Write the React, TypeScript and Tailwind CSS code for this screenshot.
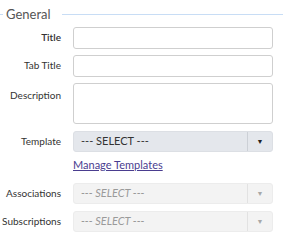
import { ReactNode } from "react";

// ================= ROW =================
function Row({
  label,
  children,
  top = false,
  bold = false,
}: {
  label: string;
  children: ReactNode;
  top?: boolean;
  bold?: boolean;
}) {
  return (
    <div className={`flex ${top ? "items-start" : "items-center"}`}>
      <div
        className={`w-[62px] shrink-0 whitespace-nowrap pr-[1px] text-right text-[10px] text-[#333] ${
          top ? "pt-[5px]" : ""
        } ${bold ? "font-semibold" : ""}`}
      >
        {label}
      </div>
      <div className="ml-[11px] w-[200px]">{children}</div>
    </div>
  );
}

function Select({ disabled = false }: { disabled?: boolean }) {
  return (
    <div
      className={`flex h-[21px] items-center rounded-[3px] border ${
        disabled ? "border-[#ececec] bg-[#f3f3f3]" : "border-[#dcdfe4] bg-[#e4e7ec]"
      }`}
    >
      <span
        className={`flex-1 pl-[7px] text-[11px] ${
          disabled ? "italic text-[#9a9a9a]" : "text-[#333]"
        }`}
      >
        --- SELECT ---
      </span>
      <span
        className={`flex h-full w-[25px] items-center justify-center border-l ${
          disabled ? "border-[#e2e2e2] text-[#a8a8a8]" : "border-[#ccd0d6] text-[#222]"
        } text-[7px]`}
      >
        ▼
      </span>
    </div>
  );
}

// ================= APP =================
export default function App() {
  return (
    <main
      className="h-[242px] w-[283px] bg-white"
      style={{ fontFamily: 'Lato, "Liberation Sans", sans-serif' }}
    >
      {/* LEGEND */}
      <div className="flex items-center pt-[5px]">
        <div className="h-px w-[3px] bg-[#c8ddf5]" />
        <span className="px-[3px] text-[13px] text-[#555]">General</span>
        <div className="ml-[8px] h-px flex-1 bg-[#c8ddf5]" />
      </div>

      <div className="mt-[2px] flex flex-col gap-[6px]">
        <Row label="Title" bold>
          <input className="block h-[22px] w-full rounded-[3px] border border-[#cfcfcf]" />
        </Row>
        <Row label="Tab Title">
          <input className="block h-[22px] w-full rounded-[3px] border border-[#cfcfcf]" />
        </Row>
        <Row label="Description" top>
          <textarea className="block h-[41px] w-full resize-none rounded-[3px] border border-[#cfcfcf]" />
        </Row>
        <div className="mt-[1px]">
          <Row label="Template">
            <Select />
          </Row>
        </div>
        <div className="ml-[73px] text-[11px] leading-[14px] text-[#4a3d8f] underline">
          Manage Templates
        </div>
        <div className="mt-[5px] flex flex-col gap-[7px]">
          <Row label="Associations">
            <Select disabled />
          </Row>
          <Row label="Subscriptions">
            <Select disabled />
          </Row>
        </div>
      </div>
    </main>
  );
}
